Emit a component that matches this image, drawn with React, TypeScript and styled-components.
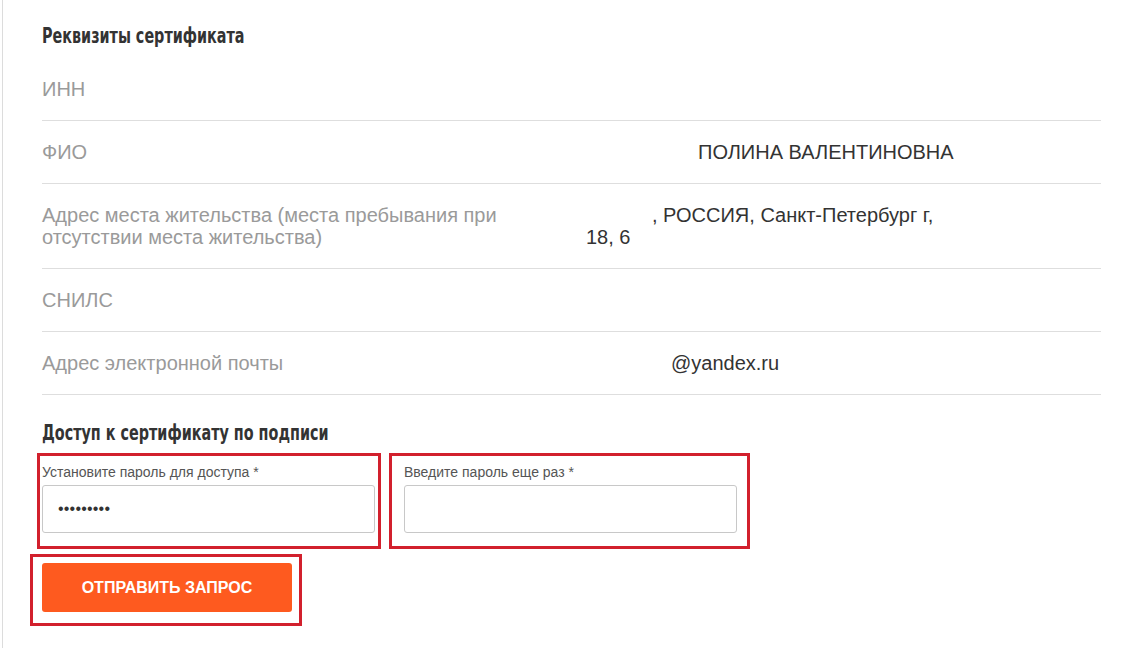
import React from 'react'
import styled, { createGlobalStyle } from 'styled-components'

const GlobalStyle = createGlobalStyle`
  html, body {
    margin: 0;
    padding: 0;
    background: #fff;
  }
  body {
    font-family: 'Liberation Sans', Arial, sans-serif;
  }
`

const Page = styled.div`
  margin-left: 2px;
  border-left: 1px solid #dcdcdc;
  min-height: 648px;
  box-sizing: border-box;
  padding: 24px 44px 0 39px;
`

// condensed heading face squeezed from DejaVu Sans Condensed
const Heading = styled.h2<{ $top?: number }>`
  display: block;
  width: max-content;
  margin: ${({ $top }) => $top ?? 0}px 0 10px;
  font-family: 'DejaVu Sans Condensed', 'Liberation Sans Narrow', sans-serif;
  font-weight: 700;
  font-size: 21px;
  line-height: 24px;
  color: #333;
  transform: scaleX(0.76);
  transform-origin: left center;
`

const Table = styled.div`
  display: flex;
  flex-direction: column;
`

const Row = styled.div`
  display: grid;
  grid-template-columns: 529px 1fr;
  padding: 20px 0;
  border-bottom: 1px solid #dedede;
  font-size: 20px;
  line-height: 22px;
`

const Label = styled.div`
  color: #9a9a9a;
  padding-right: 30px;
`

const Value = styled.div`
  color: #333;
`

const Blank = styled.span<{ $w: number }>`
  display: inline-block;
  width: ${({ $w }) => $w}px;
`

const Fields = styled.div`
  display: flex;
  gap: 29px;
  margin-top: 19px;
`

const Field = styled.label`
  position: relative;
  display: flex;
  flex-direction: column;
  gap: 5px;
  width: 333px;
`

const FieldLabel = styled.span`
  font-size: 14px;
  line-height: 16px;
  color: #555;
`

const Input = styled.input`
  box-sizing: border-box;
  height: 48px;
  width: 100%;
  border: 1px solid #c8c8c8;
  border-radius: 3px;
  padding: 0 15px;
  font-size: 16px;
  letter-spacing: 0.2px;
  color: #333;
  background: #fff;
  outline: none;
`

// red annotation frames drawn on top of the form
const Mark = styled.span<{ $l: number; $r: number; $t: number; $b: number }>`
  position: absolute;
  left: ${({ $l }) => -$l}px;
  right: ${({ $r }) => -$r}px;
  top: ${({ $t }) => -$t}px;
  bottom: ${({ $b }) => -$b}px;
  border: 3px solid #d2202d;
  pointer-events: none;
`

const ButtonWrap = styled.div`
  position: relative;
  display: inline-block;
  margin-top: 30px;
`

const Button = styled.button`
  width: 250px;
  height: 49px;
  border: 0;
  border-radius: 3px;
  background: #fe5a1f;
  color: #fff;
  font-family: 'Liberation Sans', Arial, sans-serif;
  font-weight: 700;
  font-size: 16px;
  text-transform: uppercase;
  cursor: pointer;
`

const rows = [
  { label: 'ИНН', value: null },
  {
    label: 'ФИО',
    value: (
      <>
        <Blank $w={127} />
        ПОЛИНА ВАЛЕНТИНОВНА
      </>
    ),
  },
  {
    label: 'Адрес места жительства (места пребывания при отсутствии места жительства)',
    value: (
      <>
        <Blank $w={81} />, РОССИЯ, Санкт-Петербург г,
        <br />
        <Blank $w={15} />
        18, 6
      </>
    ),
  },
  { label: 'СНИЛС', value: null },
  {
    label: 'Адрес электронной почты',
    value: (
      <>
        <Blank $w={100} />
        @yandex.ru
      </>
    ),
  },
]

const App = () => {
  return (
    <>
      <GlobalStyle />
      <Page>
        <Heading>Реквизиты сертификата</Heading>
        <Table>
          {rows.map((row) => (
            <Row key={row.label}>
              <Label>{row.label}</Label>
              <Value>{row.value}</Value>
            </Row>
          ))}
        </Table>

        <Heading $top={26}>Доступ к сертификату по подписи</Heading>
        <Fields>
          <Field>
            <FieldLabel>Установите пароль для доступа *</FieldLabel>
            <Input type="password" defaultValue="123456789" />
            <Mark $l={5} $r={6} $t={11} $b={16} />
          </Field>
          <Field>
            <FieldLabel>Введите пароль еще раз *</FieldLabel>
            <Input type="password" />
            <Mark $l={15} $r={13} $t={11} $b={16} />
          </Field>
        </Fields>
        <ButtonWrap>
          <Button>Отправить запрос</Button>
          <Mark $l={12} $r={10} $t={9} $b={14} />
        </ButtonWrap>
      </Page>
    </>
  )
}

export default App
